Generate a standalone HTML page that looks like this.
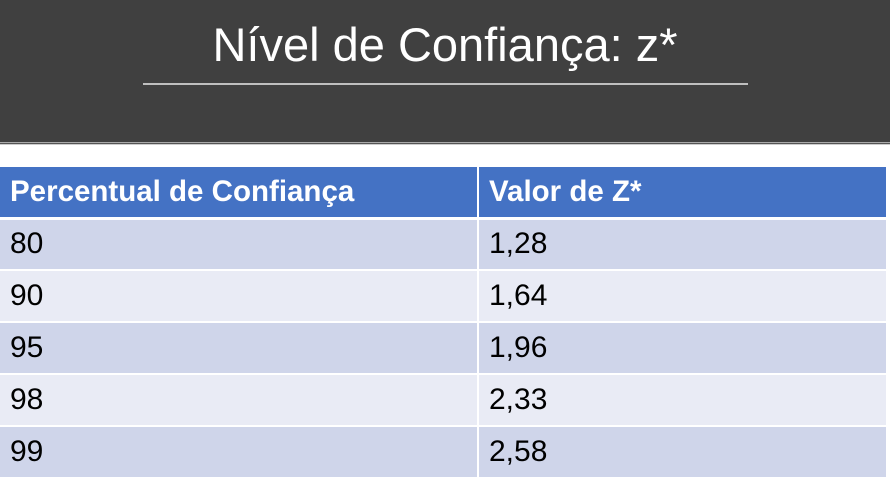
<!DOCTYPE html>
<html><head><meta charset="utf-8"><style>
body{margin:0;width:890px;height:480px;overflow:hidden;background:#fff;font-family:"Liberation Sans",Arial,sans-serif;position:relative}
.top{position:absolute;left:0;top:0;width:890px;height:142px;background:#404040}
.title{position:absolute;left:0;width:890px;top:14px;text-align:center;color:#fff;font-size:47px;font-weight:300;line-height:62px}
.ul{position:absolute;left:143px;top:83px;width:605px;height:2px;background:#bfbfbf}
.l1{position:absolute;left:0;top:142px;width:890px;height:1px;background:#aaa}
.l2{position:absolute;left:0;top:143px;width:890px;height:1px;background:#555}
.l3{position:absolute;left:0;top:144px;width:890px;height:1px;background:#ccc}
table{position:absolute;left:0;top:167px;width:888px;border-collapse:collapse}
td{height:52px;padding:0 0 0 10px;font-size:30px;color:#000;border:1px solid #fff;border-width:0 2px 2px 0;box-sizing:border-box}
tr.h td{background:#4472c4;color:#fff;font-weight:bold;height:51px;border-bottom-width:3px;font-size:29.5px}
tr.a td{background:#cfd5ea}
tr.b td{background:#e9ebf5}
td:first-child{width:478px}
</style></head><body>
<div class="top"><div class="title">Nível de Confiança: z*</div><div class="ul"></div></div>
<div class="l1"></div><div class="l2"></div><div class="l3"></div>
<table>
<tr class="h"><td>Percentual de Confiança</td><td>Valor de Z*</td></tr>
<tr class="a"><td>80</td><td>1,28</td></tr>
<tr class="b"><td>90</td><td>1,64</td></tr>
<tr class="a"><td>95</td><td>1,96</td></tr>
<tr class="b"><td>98</td><td>2,33</td></tr>
<tr class="a"><td>99</td><td>2,58</td></tr>
</table>
</body></html>
